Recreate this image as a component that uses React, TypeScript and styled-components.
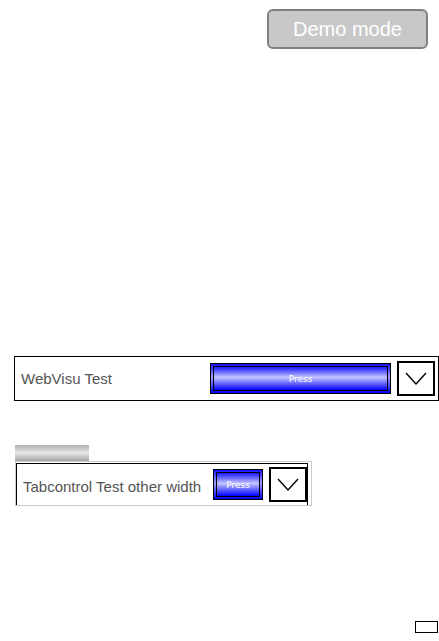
import styled, { createGlobalStyle } from "styled-components";

const GlobalStyle = createGlobalStyle`
  html, body {
    margin: 0;
    padding: 0;
    background: #ffffff;
    font-family: "Liberation Sans", Arial, sans-serif;
  }
`;

const Page = styled.div`
  width: 439px;
  height: 641px;
  display: flex;
  flex-direction: column;
  box-sizing: border-box;
  overflow: hidden;
`;

const TopBar = styled.div`
  display: flex;
  justify-content: flex-end;
  padding: 9px 11px 0 0;
`;

const DemoButton = styled.div`
  width: 161px;
  height: 40px;
  box-sizing: border-box;
  border: 2px solid #808080;
  border-radius: 6px;
  background: #c8c8c8;
  color: #ffffff;
  font-size: 20px;
  display: flex;
  align-items: center;
  justify-content: center;
`;

const Frame = styled.div<{ $top: number; $left: number; $width: number }>`
  margin: ${(p) => p.$top}px 0 0 ${(p) => p.$left}px;
  width: ${(p) => p.$width}px;
  height: 45px;
  box-sizing: border-box;
  border: 1px solid #000000;
  display: flex;
  align-items: center;
  padding: 0 3px 0 6px;
`;

const Label = styled.span`
  flex: 1;
  font-size: 15px;
  color: #555555;
  white-space: nowrap;
`;

const PressButton = styled.div<{ $width: number; $offset?: number }>`
  width: ${(p) => p.$width}px;
  height: 31px;
  box-sizing: border-box;
  border: 1px solid #000000;
  padding: 2px;
  margin: ${(p) => p.$offset ?? 0}px 6px 0 0;
  background: linear-gradient(#1010ff 0%, #a0a0ff 45%, #0000ff 100%);
  display: flex;
`;

const PressFace = styled.div`
  flex: 1;
  border: 1px solid #000000;
  background: linear-gradient(#1818ff 0%, #c4c4ff 45%, #0000ff 100%);
  color: #ffffff;
  font-size: 9px;
  font-family: "DejaVu Sans", Verdana, sans-serif;
  display: flex;
  align-items: center;
  justify-content: center;
`;

const DropBox = styled.div`
  width: 38px;
  height: 35px;
  box-sizing: border-box;
  border: 2px solid #000000;
  display: flex;
  align-items: center;
  justify-content: center;
`;

const TabArea = styled.div`
  margin: 44px 0 0 15px;
  display: flex;
  flex-direction: column;
  align-items: flex-start;
`;

const TabHeader = styled.div`
  width: 74px;
  height: 16px;
  background: linear-gradient(#b0b0b0 0%, #e8e8e8 50%, #a4a4a4 100%);
`;

const TabPanel = styled.div`
  width: 297px;
  height: 45px;
  box-sizing: border-box;
  border: 1px solid #cccccc;
  padding: 1px 3px 0 0;
  overflow: hidden;
`;

const TabInner = styled.div`
  height: 50px;
  box-sizing: border-box;
  border: 1px solid #000000;
  display: flex;
  align-items: flex-start;
  padding: 3px 0 0 6px;
`;

const TabLabel = styled(Label)`
  padding-top: 11px;
`;

const Footer = styled.div`
  margin-top: auto;
  display: flex;
  justify-content: flex-end;
  padding: 0 1px 8px 0;
`;

const SmallBox = styled.div`
  width: 23px;
  height: 12px;
  box-sizing: border-box;
  border: 1px solid #000000;
`;

const Chevron = () => (
  <svg width="22" height="14" viewBox="0 0 22 14">
    <polyline points="1,1 11,12 21,1" fill="none" stroke="#000" strokeWidth="1.4" />
  </svg>
);

export default function App() {
  return (
    <>
      <GlobalStyle />
      <Page>
        <TopBar>
          <DemoButton>Demo mode</DemoButton>
        </TopBar>
        <Frame $top={307} $left={14} $width={425}>
          <Label>WebVisu Test</Label>
          <PressButton $width={181}>
            <PressFace>Press</PressFace>
          </PressButton>
          <DropBox>
            <Chevron />
          </DropBox>
        </Frame>
        <TabArea>
          <TabHeader />
          <TabPanel>
            <TabInner>
              <TabLabel>Tabcontrol Test other width</TabLabel>
              <PressButton $width={50} $offset={2}>
                <PressFace>Press</PressFace>
              </PressButton>
              <DropBox>
                <Chevron />
              </DropBox>
            </TabInner>
          </TabPanel>
        </TabArea>
        <Footer>
          <SmallBox />
        </Footer>
      </Page>
    </>
  );
}
